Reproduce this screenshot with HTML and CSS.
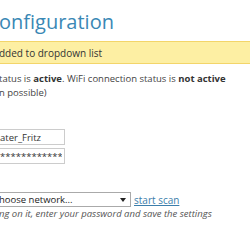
FILE: index.html
```html
<!DOCTYPE html>
<html>
<head>
	<meta charset="utf-8">
	<title>WiFi configuration</title>
	<link rel="stylesheet" href="styles.css">
</head>
<body>

<div class="page">
	<h1>onfiguration</h1>

	<div class="notice">dded to dropdown list</div>

	<p class="status">tatus is <b>active</b>. WiFi connection status is <b>not active</b><br>n possible)</p>

	<div class="fields">
		<input class="field" type="text" value="ater_Fritz">
		<input class="field" type="text" value="**************">
	</div>

	<div class="scan">
		<span class="selectWrap">
			<select class="networks">
				<option>hoose network...</option>
			</select>
		</span>
		<a href="#" class="scanLink">start scan</a>
	</div>
	<p class="hint">ng on it, enter your password and save the settings</p>
</div>

</body>
</html>
```

FILE: styles.css
```css
body {
	margin: 0;
	background-color: white;
	font-family: 'Open Sans', sans-serif;
	color: #333;
	overflow: hidden;
}

.page {
	margin-left: -1px;
}

h1 {
	font-size: 20px;
	font-weight: 400;
	line-height: 24px;
	margin: 10px 0 7px;
	color: #3a88b5;
}

.notice {
	background-color: #fdefa3;
	border-top: 1px solid #f3d56a;
	border-bottom: 1px solid #f3d56a;
	font-size: 10px;
	line-height: 14px;
	padding: 4px 0 3px;
	color: #333;
}

.status {
	font-size: 9.5px;
	line-height: 14px;
	margin: 8px 0 0;
	color: #444;
}
.status b {
	font-weight: 700;
	color: #333;
}

.fields {
	display: flex;
	flex-direction: column;
	gap: 3px;
	margin-top: 29px;
	width: 66px;
}
.field {
	font-family: 'Open Sans', sans-serif;
	font-size: 9.5px;
	height: 16px;
	box-sizing: border-box;
	border: 1px solid #ccc;
	padding: 0 2px 0 0;
	margin: 0;
	color: #333;
}

.scan {
	display: flex;
	align-items: center;
	gap: 3px;
	margin-top: 28px;
}
.selectWrap {
	position: relative;
	display: inline-block;
}
.selectWrap::after {
	content: "";
	position: absolute;
	right: 5px;
	top: 6px;
	border-left: 3px solid transparent;
	border-right: 3px solid transparent;
	border-top: 4px solid #222;
}
.networks {
	-webkit-appearance: none;
	appearance: none;
	width: 132px;
	height: 15px;
	box-sizing: border-box;
	border: 1px solid #aaa;
	border-left: none;
	border-radius: 0;
	background: white;
	font-family: 'Open Sans', sans-serif;
	font-size: 9.5px;
	padding: 0;
	color: #222;
	display: block;
}
.scanLink {
	font-size: 10px;
	color: #3c7eab;
	text-decoration: underline;
}

.hint {
	font-size: 9.5px;
	font-style: italic;
	line-height: 14px;
	margin: 0;
	color: #555;
}
```
